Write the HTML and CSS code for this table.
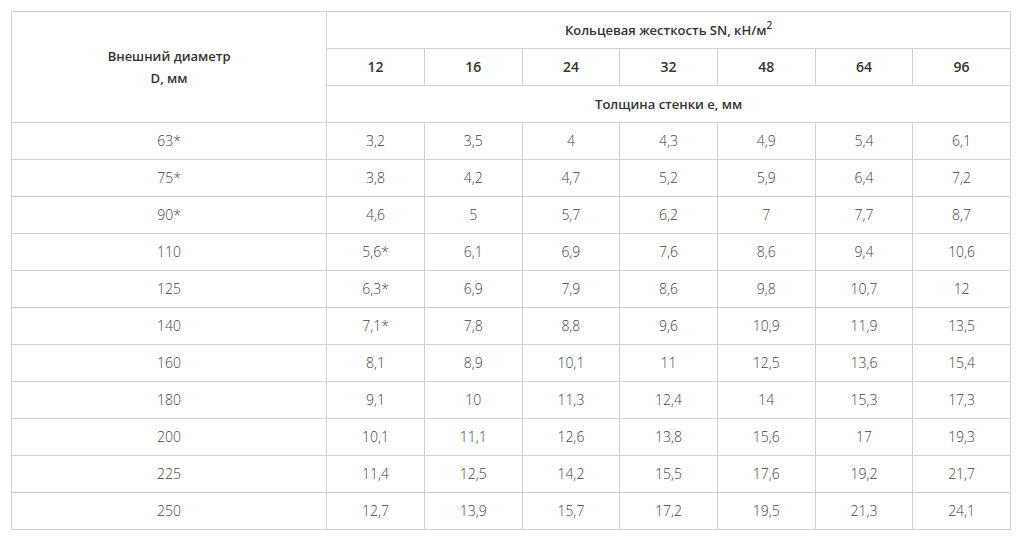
FILE: index.html
```html
<!DOCTYPE html>
<html lang="ru">
<head>
<meta charset="utf-8">
<link rel="stylesheet" href="styles.css">
</head>
<body>
<table class="spec">
  <colgroup>
    <col class="c-d">
    <col class="c-n"><col class="c-n"><col class="c-n"><col class="c-n"><col class="c-n"><col class="c-n"><col class="c-n">
  </colgroup>
  <thead>
    <tr>
      <th rowspan="3" class="dia">Внешний диаметр<br>D, мм</th>
      <th colspan="7">Кольцевая жесткость SN, кН/м<sup>2</sup></th>
    </tr>
    <tr>
      <th class="num">12</th><th class="num">16</th><th class="num">24</th><th class="num">32</th><th class="num">48</th><th class="num">64</th><th class="num">96</th>
    </tr>
    <tr>
      <th colspan="7">Толщина стенки е, мм</th>
    </tr>
  </thead>
  <tbody>
    <tr><td>63*</td><td>3,2</td><td>3,5</td><td>4</td><td>4,3</td><td>4,9</td><td>5,4</td><td>6,1</td></tr>
    <tr><td>75*</td><td>3,8</td><td>4,2</td><td>4,7</td><td>5,2</td><td>5,9</td><td>6,4</td><td>7,2</td></tr>
    <tr><td>90*</td><td>4,6</td><td>5</td><td>5,7</td><td>6,2</td><td>7</td><td>7,7</td><td>8,7</td></tr>
    <tr><td>110</td><td>5,6*</td><td>6,1</td><td>6,9</td><td>7,6</td><td>8,6</td><td>9,4</td><td>10,6</td></tr>
    <tr><td>125</td><td>6,3*</td><td>6,9</td><td>7,9</td><td>8,6</td><td>9,8</td><td>10,7</td><td>12</td></tr>
    <tr><td>140</td><td>7,1*</td><td>7,8</td><td>8,8</td><td>9,6</td><td>10,9</td><td>11,9</td><td>13,5</td></tr>
    <tr><td>160</td><td>8,1</td><td>8,9</td><td>10,1</td><td>11</td><td>12,5</td><td>13,6</td><td>15,4</td></tr>
    <tr><td>180</td><td>9,1</td><td>10</td><td>11,3</td><td>12,4</td><td>14</td><td>15,3</td><td>17,3</td></tr>
    <tr><td>200</td><td>10,1</td><td>11,1</td><td>12,6</td><td>13,8</td><td>15,6</td><td>17</td><td>19,3</td></tr>
    <tr><td>225</td><td>11,4</td><td>12,5</td><td>14,2</td><td>15,5</td><td>17,6</td><td>19,2</td><td>21,7</td></tr>
    <tr><td>250</td><td>12,7</td><td>13,9</td><td>15,7</td><td>17,2</td><td>19,5</td><td>21,3</td><td>24,1</td></tr>
  </tbody>
</table>
</body>
</html>
```

FILE: styles.css
```css
html, body {
  margin: 0;
  padding: 0;
  background: #fff;
}
body {
  padding: 11px 0 0 11px;
  font-family: "Open Sans", "Noto Sans", sans-serif;
  font-size: 14px;
}
.spec {
  border-collapse: collapse;
  table-layout: fixed;
  width: 1000px;
}
.c-d { width: 313px; }
.c-n { width: 97px; }
.spec th,
.spec td {
  border: 1px solid #d2d2d2;
  height: 36px;
  padding: 0;
  text-align: center;
  vertical-align: middle;
  line-height: 22px;
}
.spec th {
  font-size: 13px;
  font-weight: 600;
  color: #333;
}
.spec th.num {
  font-size: 14px;
}
.spec td {
  font-weight: 300;
  color: #444;
}
.spec sup {
  font-size: 10px;
  line-height: 0;
  vertical-align: 6px;
}
```
